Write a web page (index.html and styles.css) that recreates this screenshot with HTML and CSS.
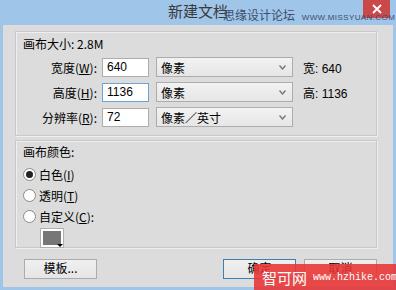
FILE: index.html
```html
<!DOCTYPE html>
<html lang="zh">
<head>
<meta charset="utf-8">
<link rel="stylesheet" href="styles.css">
</head>
<body>
<div class="window">
  <div class="titlebar">
    <span></span>
    <span class="title">新建文档</span>
    <span class="close"><svg width="10" height="10" viewBox="0 0 10 10"><path d="M1 1L9 9M9 1L1 9" stroke="#fff" stroke-width="1.8"/></svg></span>
  </div>
  <div class="wm-top">思缘设计论坛 <span class="wm-url">WWW.MISSYUAN.COM</span></div>
  <div class="frame">
    <div class="panel">
      <div class="group g1">
        <div class="legend">画布大小: 2.8M</div>
        <div class="row">
          <span class="lbl">宽度(<u>W</u>):</span>
          <span class="input">640</span>
          <span class="select">像素<svg class="chev" width="7" height="5" viewBox="0 0 7 5"><path d="M0.5 0.5L3.5 4L6.5 0.5" fill="none" stroke="#777" stroke-width="1.4"/></svg></span>
          <span class="info">宽: 640</span>
        </div>
        <div class="row">
          <span class="lbl">高度(<u>H</u>):</span>
          <span class="input focus">1136</span>
          <span class="select">像素<svg class="chev" width="7" height="5" viewBox="0 0 7 5"><path d="M0.5 0.5L3.5 4L6.5 0.5" fill="none" stroke="#777" stroke-width="1.4"/></svg></span>
          <span class="info">高: 1136</span>
        </div>
        <div class="row">
          <span class="lbl">分辨率(<u>R</u>):</span>
          <span class="input">72</span>
          <span class="select">像素／英寸<svg class="chev" width="7" height="5" viewBox="0 0 7 5"><path d="M0.5 0.5L3.5 4L6.5 0.5" fill="none" stroke="#777" stroke-width="1.4"/></svg></span>
        </div>
      </div>
      <div class="group g2">
        <div class="legend">画布颜色:</div>
        <div class="radio"><span class="dot on"></span>白色(<u>I</u>)</div>
        <div class="radio"><span class="dot"></span>透明(<u>T</u>)</div>
        <div class="radio"><span class="dot"></span>自定义(<u>C</u>):</div>
        <div class="swatch"><span class="tri"></span></div>
      </div>
    </div>
    <div class="buttons">
      <span class="btn">模板...</span>
      <span class="spacer"></span>
      <span class="btn default">确定</span>
      <span class="btn">取消</span>
    </div>
  </div>
  <div class="wm-bottom"><span class="wm-cn">智可网</span><span class="wm-en">www.hzhike.com</span></div>
</div>
</body>
</html>
```
FILE: styles.css
```css
* { box-sizing: border-box; }
html, body { margin: 0; }
body {
  width: 396px;
  height: 290px;
  overflow: hidden;
  background: #9fc5e9;
  font-family: "Liberation Sans", "Noto Sans CJK SC", sans-serif;
  font-size: 12px;
  color: #000;
}
.window {
  position: relative;
  height: 290px;
  display: flex;
  flex-direction: column;
}
.titlebar {
  height: 25px;
  display: grid;
  grid-template-columns: 1fr auto 1fr;
  align-items: start;
}
.title {
  font-family: "Noto Sans CJK SC", sans-serif;
  font-size: 15px;
  line-height: 20px;
  color: #3a3a3a;
  padding-top: 1px;
}
.close {
  justify-self: end;
  margin-right: 6px;
  width: 27px;
  height: 18px;
  background: #c9494a;
  display: flex;
  align-items: center;
  justify-content: center;
}
.wm-top {
  position: absolute;
  left: 223px;
  top: 7px;
  font-family: "Noto Sans CJK SC", sans-serif;
  font-size: 12px;
  line-height: 16px;
  color: #3e4d6b;
  white-space: nowrap;
}
.wm-url {
  font-family: "Liberation Sans", sans-serif;
  font-size: 8px;
  letter-spacing: 0.4px;
  margin-left: 4px;
}
.frame {
  flex: 1;
  margin: 0 3px 3px;
  background: #dcdcdc;
  padding: 6px 16px 0 12px;
  display: flex;
  flex-direction: column;
}
.panel {
  display: flex;
  flex-direction: column;
}
.group {
  border: 1px solid #c8c8c8;
  box-shadow: inset 1px 1px 0 #efefef, 1px 1px 0 #efefef;
  padding: 0 8px 8px 7px;
}
.g1 { padding-top: 4px; }
.g2 { margin-top: 4px; padding-top: 3px; height: 108px; }
.legend {
  font-family: "Noto Sans CJK SC", sans-serif;
  line-height: 16px;
  height: 16px;
  margin-bottom: 4px;
}
.row {
  display: flex;
  align-items: center;
  height: 20px;
  margin-top: 5px;
}
.g1 .row:first-of-type { margin-top: 0; }
.lbl {
  width: 74px;
  text-align: right;
  font-family: "Noto Sans CJK SC", sans-serif;
  white-space: nowrap;
}
.input {
  width: 47px;
  height: 19px;
  margin-left: 5px;
  background: #fff;
  border: 1px solid #adadad;
  padding: 0 4px;
  line-height: 17px;
}
.input.focus { border-color: #6aa4d8; }
.select {
  width: 137px;
  height: 20px;
  margin-left: 7px;
  border: 1px solid #adadad;
  background: linear-gradient(#f2f2f2, #e6e6e6);
  padding: 0 6px 0 4px;
  display: flex;
  align-items: center;
  justify-content: space-between;
  font-family: "Noto Sans CJK SC", sans-serif;
}
.info {
  margin-left: 10px;
  font-family: "Liberation Sans", "Noto Sans CJK SC", sans-serif;
}
.radio {
  display: flex;
  align-items: center;
  height: 21px;
  font-family: "Noto Sans CJK SC", sans-serif;
}
.dot {
  width: 13px;
  height: 13px;
  border-radius: 50%;
  border: 1px solid #8a8a8a;
  background: #fff;
  margin-right: 3px;
  display: flex;
  align-items: center;
  justify-content: center;
}
.dot.on::after {
  content: "";
  width: 7px;
  height: 7px;
  border-radius: 50%;
  background: #222;
}
.swatch {
  margin: 2px 0 0 18px;
  width: 22px;
  height: 18px;
  background: #777;
  border: 2px solid #fff;
  outline: 1px solid #b0b0b0;
  position: relative;
}
.tri {
  position: absolute;
  right: -2px;
  bottom: -2px;
  width: 0;
  height: 0;
  border-left: 3px solid transparent;
  border-right: 3px solid transparent;
  border-top: 3px solid #000;
}
.buttons {
  display: flex;
  margin-top: 11px;
  padding-left: 9px;
  gap: 8px;
}
.spacer { flex: 1; }
.btn {
  width: 73px;
  height: 20px;
  border: 1px solid #acacac;
  background: linear-gradient(#f0f0f0, #e5e5e5);
  display: flex;
  align-items: center;
  justify-content: center;
  padding-bottom: 3px;
  font-family: "Noto Sans CJK SC", sans-serif;
}
.btn.default { border-color: #3c7fb1; }
.wm-bottom {
  position: absolute;
  right: 0;
  bottom: 0;
  width: 142px;
  height: 26px;
  background: rgba(232, 52, 52, 0.88);
  color: #fff;
  display: flex;
  align-items: center;
  padding-left: 8px;
  white-space: nowrap;
}
.wm-cn {
  font-family: "Noto Sans CJK SC", sans-serif;
  font-size: 15px;
  margin-right: 6px;
}
.wm-en {
  font-family: "Liberation Mono", monospace;
  font-size: 10px;
}
```
